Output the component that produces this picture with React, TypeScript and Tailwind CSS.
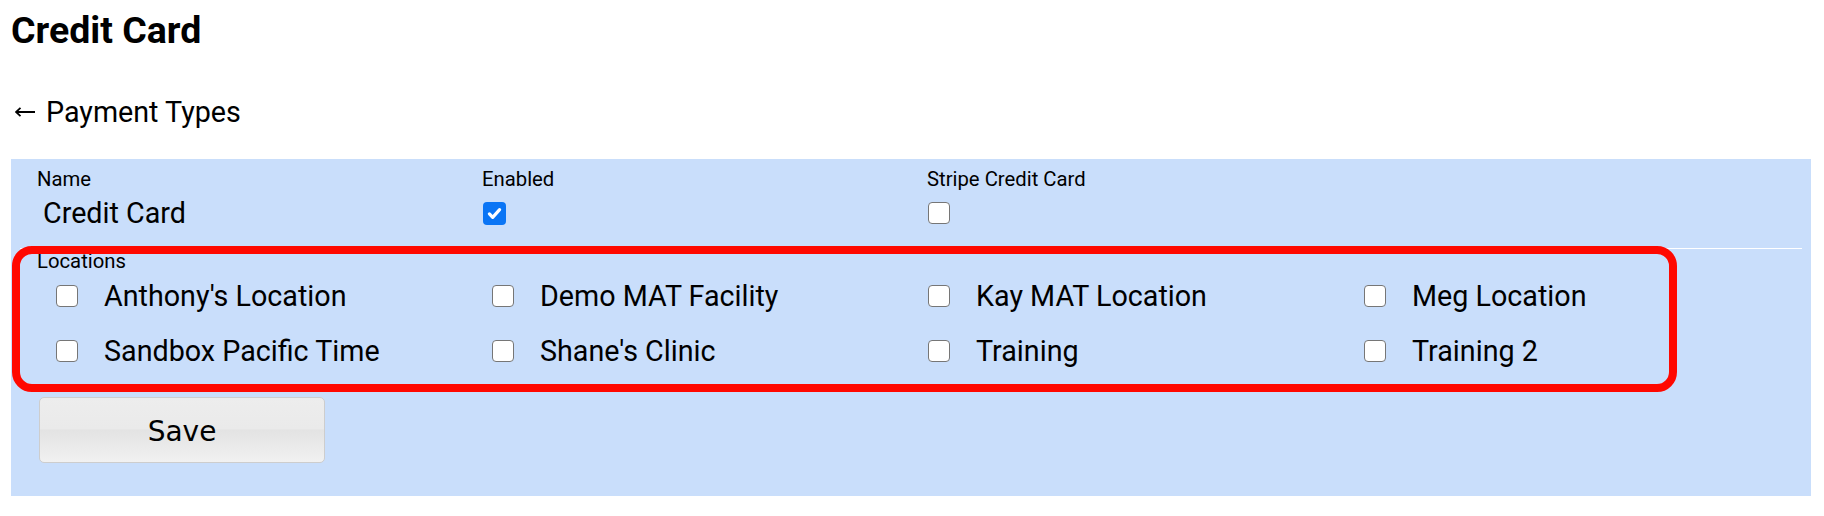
const locations = [
  "Anthony's Location",
  'Demo MAT Facility',
  'Kay MAT Location',
  'Meg Location',
  'Sandbox Pacific Time',
  "Shane's Clinic",
  'Training',
  'Training 2',
]

function Checkbox({ checked = false }: { checked?: boolean }) {
  if (checked) {
    return (
      <span className="flex h-[23px] w-[23px] items-center justify-center rounded-[4px] bg-[#0a75f5]">
        <svg viewBox="0 0 16 16" className="h-[17px] w-[17px]">
          <path
            d="M3.2 8.4l3.1 3.2L12.8 4.4"
            fill="none"
            stroke="white"
            strokeWidth="3"
            strokeLinecap="round"
            strokeLinejoin="round"
          />
        </svg>
      </span>
    )
  }
  return (
    <span className="block h-[22px] w-[22px] rounded-[4px] border-[1.5px] border-[#767676] bg-white" />
  )
}

export default function App() {
  return (
    <div className="min-h-screen w-full bg-white font-[family-name:Roboto,sans-serif] text-black">
      <h1 className="pl-[11px] pt-[12px] text-[37.5px] font-bold leading-[36px]">Credit Card</h1>

      <div className="mt-[50px] flex h-[28px] items-center pl-[15px]">
        {/* back arrow */}
        <svg viewBox="0 0 20 10" className="h-[10px] w-[20px]">
          <path d="M1 5h19M5.5 0.8L1 5l4.5 4.2" fill="none" stroke="black" strokeWidth="1.8" />
        </svg>
        <span className="ml-[11px] text-[28.7px] leading-[28px]">Payment Types</span>
      </div>

      <div className="ml-[11px] mt-[33px] w-[1800px] bg-[#c9defb] pb-[33px]">
        {/* Header fields */}
        <div className="grid grid-cols-[445px_445px_445px] pl-[26px] pt-[10px]">
          <div className="flex flex-col">
            <span className="text-[20.3px] leading-[20px]">Name</span>
            <span className="mt-[10px] h-[28px] pl-[6px] text-[28.7px] leading-[28px]">Credit Card</span>
          </div>
          <div className="flex flex-col">
            <span className="text-[20.3px] leading-[20px]">Enabled</span>
            <div className="mt-[10px] flex h-[28px] items-center pl-[1px]">
              <Checkbox checked />
            </div>
          </div>
          <div className="flex flex-col">
            <span className="text-[20.3px] leading-[20px]">Stripe Credit Card</span>
            <div className="mt-[10px] flex h-[28px] items-center pl-[1px]">
              <Checkbox />
            </div>
          </div>
        </div>

        {/* Locations */}
        <div className="relative mt-[21px]">
          <div className="mx-[9px] h-px bg-white" />
          <div className="pl-[26px] pt-[2px] text-[20.3px] leading-[20px]">Locations</div>
          <div className="mt-[11px] grid grid-cols-[436px_436px_436px_436px] gap-y-[27px] pl-[45px]">
            {locations.map((loc) => (
              <label key={loc} className="flex h-[28px] items-center gap-[26px]">
                <Checkbox />
                <span className="text-[28.7px] leading-[28px]">{loc}</span>
              </label>
            ))}
          </div>
          <div className="pointer-events-none absolute left-[1px] top-[-2px] h-[146px] w-[1665px] rounded-[20px] border-[8px] border-[#ff0800]" />
        </div>

        <button className="ml-[28px] mt-[32px] flex h-[66px] w-[286px] items-center justify-center rounded-[5px] border border-[#cdcdcd] bg-[linear-gradient(to_bottom,#ededed_0%,#eaeaea_48%,#e3e3e3_50%,#f1f1f1_100%)] pt-[4px] font-[family-name:'DejaVu_Sans',sans-serif] text-[28px] text-black">
          Save
        </button>
      </div>
    </div>
  )
}
